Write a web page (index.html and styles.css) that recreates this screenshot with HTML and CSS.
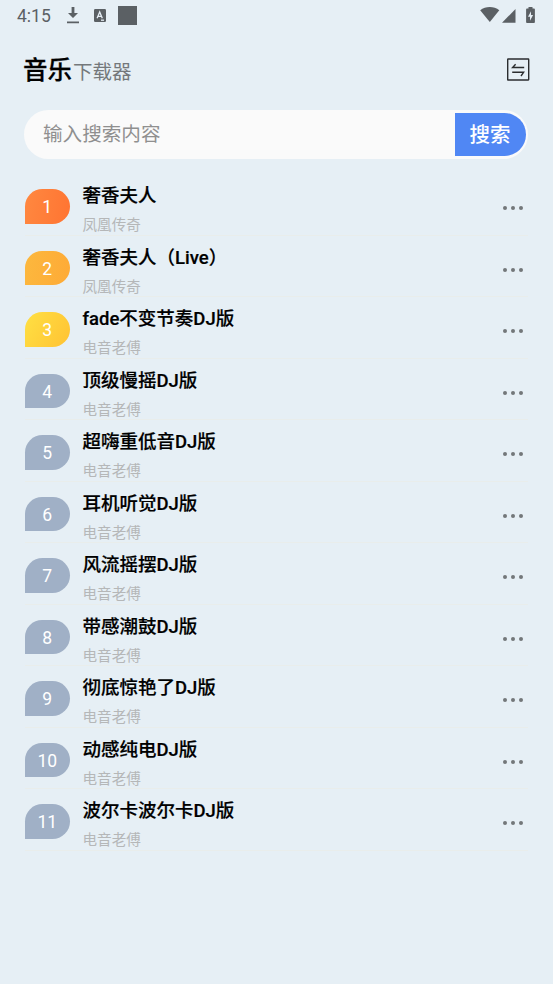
FILE: index.html
```html
<!DOCTYPE html>
<html lang="zh-CN">
<head>
<meta charset="utf-8">
<title>音乐下载器</title>
<link rel="stylesheet" href="styles.css">
</head>
<body>
<div class="status">
  <span class="clock">4:15</span>
  <svg class="st-download" viewBox="0 0 12 17" width="12" height="17"><path d="M4.6 0h2.8v6h3.6L6 11 1 6h3.6zM0 14.4h12v1.8H0z"/></svg>
  <svg class="st-lang" viewBox="0 0 12 13" width="12" height="13"><rect width="12" height="13" rx="1.2"/><path class="cut" d="M3.1 9.2L5.7 3l2.6 6.2M4 7.3h3.4"/><path class="cut" d="M7 11.2h3"/></svg>
  <span class="st-square"></span>
  <svg class="st-wifi" viewBox="0 0 20 15" width="20" height="15"><path d="M0.2 3.3C5.7-1 13.8-1 19.3 3.3L9.8 15z"/></svg>
  <svg class="st-signal" viewBox="0 0 14 14" width="14" height="14"><path d="M13.5 0v13.8H0z"/></svg>
  <svg class="st-battery" viewBox="0 0 9 16" width="9" height="16"><path d="M2.5 0h4v1.6H8a.9.9 0 0 1 .9.9v12.6a.9.9 0 0 1-.9.9H1a.9.9 0 0 1-.9-.9V2.500a.9.9 0 0 1 .9-.9h1.500z"/><path class="bolt" d="M5 4.200L2 9.700h2v4l3.100-5.700H5z"/></svg>
</div>
<header class="header">
  <h1 class="brand">音乐</h1><span class="brand-sub">下载器</span>
  <svg class="switch" viewBox="0 0 24 24" width="24" height="24"><rect x="1.700" y="1" width="21" height="21" rx=".4"/><path d="M18.200 9.500H6.600L9.600 6.200M6.200 14.300h11.400L15 18"/></svg>
</header>
<div class="search"><span class="placeholder">输入搜索内容</span><button class="go">搜索</button></div>
<ol class="list">
  <li class="row"><span class="rank r1">1</span><div class="song"><div class="name">奢香夫人</div><div class="artist">凤凰传奇</div></div><span class="more"><i></i><i></i><i></i></span></li>
  <li class="row"><span class="rank r2">2</span><div class="song"><div class="name">奢香夫人（Live）</div><div class="artist">凤凰传奇</div></div><span class="more"><i></i><i></i><i></i></span></li>
  <li class="row"><span class="rank r3">3</span><div class="song"><div class="name">fade不变节奏DJ版</div><div class="artist">电音老傅</div></div><span class="more"><i></i><i></i><i></i></span></li>
  <li class="row"><span class="rank">4</span><div class="song"><div class="name">顶级慢摇DJ版</div><div class="artist">电音老傅</div></div><span class="more"><i></i><i></i><i></i></span></li>
  <li class="row"><span class="rank">5</span><div class="song"><div class="name">超嗨重低音DJ版</div><div class="artist">电音老傅</div></div><span class="more"><i></i><i></i><i></i></span></li>
  <li class="row"><span class="rank">6</span><div class="song"><div class="name">耳机听觉DJ版</div><div class="artist">电音老傅</div></div><span class="more"><i></i><i></i><i></i></span></li>
  <li class="row"><span class="rank">7</span><div class="song"><div class="name">风流摇摆DJ版</div><div class="artist">电音老傅</div></div><span class="more"><i></i><i></i><i></i></span></li>
  <li class="row"><span class="rank">8</span><div class="song"><div class="name">带感潮鼓DJ版</div><div class="artist">电音老傅</div></div><span class="more"><i></i><i></i><i></i></span></li>
  <li class="row"><span class="rank">9</span><div class="song"><div class="name">彻底惊艳了DJ版</div><div class="artist">电音老傅</div></div><span class="more"><i></i><i></i><i></i></span></li>
  <li class="row"><span class="rank">10</span><div class="song"><div class="name">动感纯电DJ版</div><div class="artist">电音老傅</div></div><span class="more"><i></i><i></i><i></i></span></li>
  <li class="row"><span class="rank">11</span><div class="song"><div class="name">波尔卡波尔卡DJ版</div><div class="artist">电音老傅</div></div><span class="more"><i></i><i></i><i></i></span></li>
</ol>
</body>
</html>
```
FILE: styles.css
```css
* { box-sizing: border-box; }
body {
  margin: 0;
  height: 984px;
  overflow: hidden;
  background: #e6eff5;
  color: #000;
  font-family: Roboto, "Noto Sans CJK SC", sans-serif;
}
.status {
  display: flex;
  align-items: center;
  height: 29px;
  padding: 0 17px;
  color: #5b6064;
}
.status svg { fill: #5b6064; flex: none; }
.clock { width: 50px; font-size: 17.500px; line-height: 30px; padding-top: 2px; }
.st-download { margin-top: 2px; }
.st-lang { margin: 1px 0 0 15px; }
.status .cut { fill: none; stroke: #e6eef5; stroke-width: 1.300; }
.status .bolt { fill: #e6eef5; }
.st-square { width: 19px; height: 19px; margin: 1px 0 0 12px; background: #5b6064; }
.st-wifi { margin-left: auto; }
.st-signal { margin: 2px 0 0 2px; }
.st-battery { margin: 0 1px 0 10px; }
.header { display: flex; align-items: center; height: 80px; padding: 0 23px; }
.brand { margin: 4px 0 0; font-size: 24.500px; font-weight: 500; line-height: 36px; -webkit-text-stroke: .3px #000; }
.brand-sub { margin: 7px 0 0 1px; font-size: 19.500px; line-height: 30px; color: #74787b; }
.switch { margin: 2px 0 0 auto; fill: none; stroke: #2b2d2f; stroke-width: 1.400; }
.search {
  display: flex;
  align-items: center;
  justify-content: space-between;
  height: 49px;
  margin: .5px 25px 0 24px;
  padding: 3px 2.500px 3px 19px;
  border-radius: 25px;
  background: #fafafa;
}
.placeholder { font-size: 19.600px; line-height: 30px; margin-top: 2px; color: #8f8f8f; }
.go {
  width: 71px;
  height: 43px;
  padding: 1px 0 0;
  border: 0;
  border-radius: 0 22px 22px 0;
  background: #5087f4;
  color: #fff;
  font: 500 20.500px/42px Roboto, "Noto Sans CJK SC", sans-serif;
}
.list { list-style: none; margin: 15.500px 25px 0 24.500px; padding: 0; }
.row { display: flex; align-items: center; height: 61.500px; border-bottom: 1px solid #e9edeb; }
.rank {
  width: 45.500px;
  height: 34.500px;
  margin-top: 4.500px;
  border-radius: 20px 20px 20px 0;
  background: #a0b0c6;
  color: #fff;
  font-size: 17.500px;
  line-height: 36px;
  text-align: center;
}
.r1 { background: linear-gradient(100deg, #ff8840, #ff7432); }
.r2 { background: linear-gradient(100deg, #fcb83e, #feaa36); }
.r3 { background: linear-gradient(120deg, #ffe043, #ffc233); }
.song { flex: 1; margin-left: 12.500px; padding-top: 9.500px; }
.name { height: 32px; font-size: 18.500px; font-weight: 500; line-height: 32px; -webkit-text-stroke: .2px #000; }
.artist { height: 26px; font-size: 14.600px; line-height: 26px; color: #b5b7b8; }
.more { display: flex; gap: 3.700px; margin: 7.500px 5.500px 0 0; }
.more i { width: 4px; height: 4px; border-radius: 50%; background: #737779; }
```
